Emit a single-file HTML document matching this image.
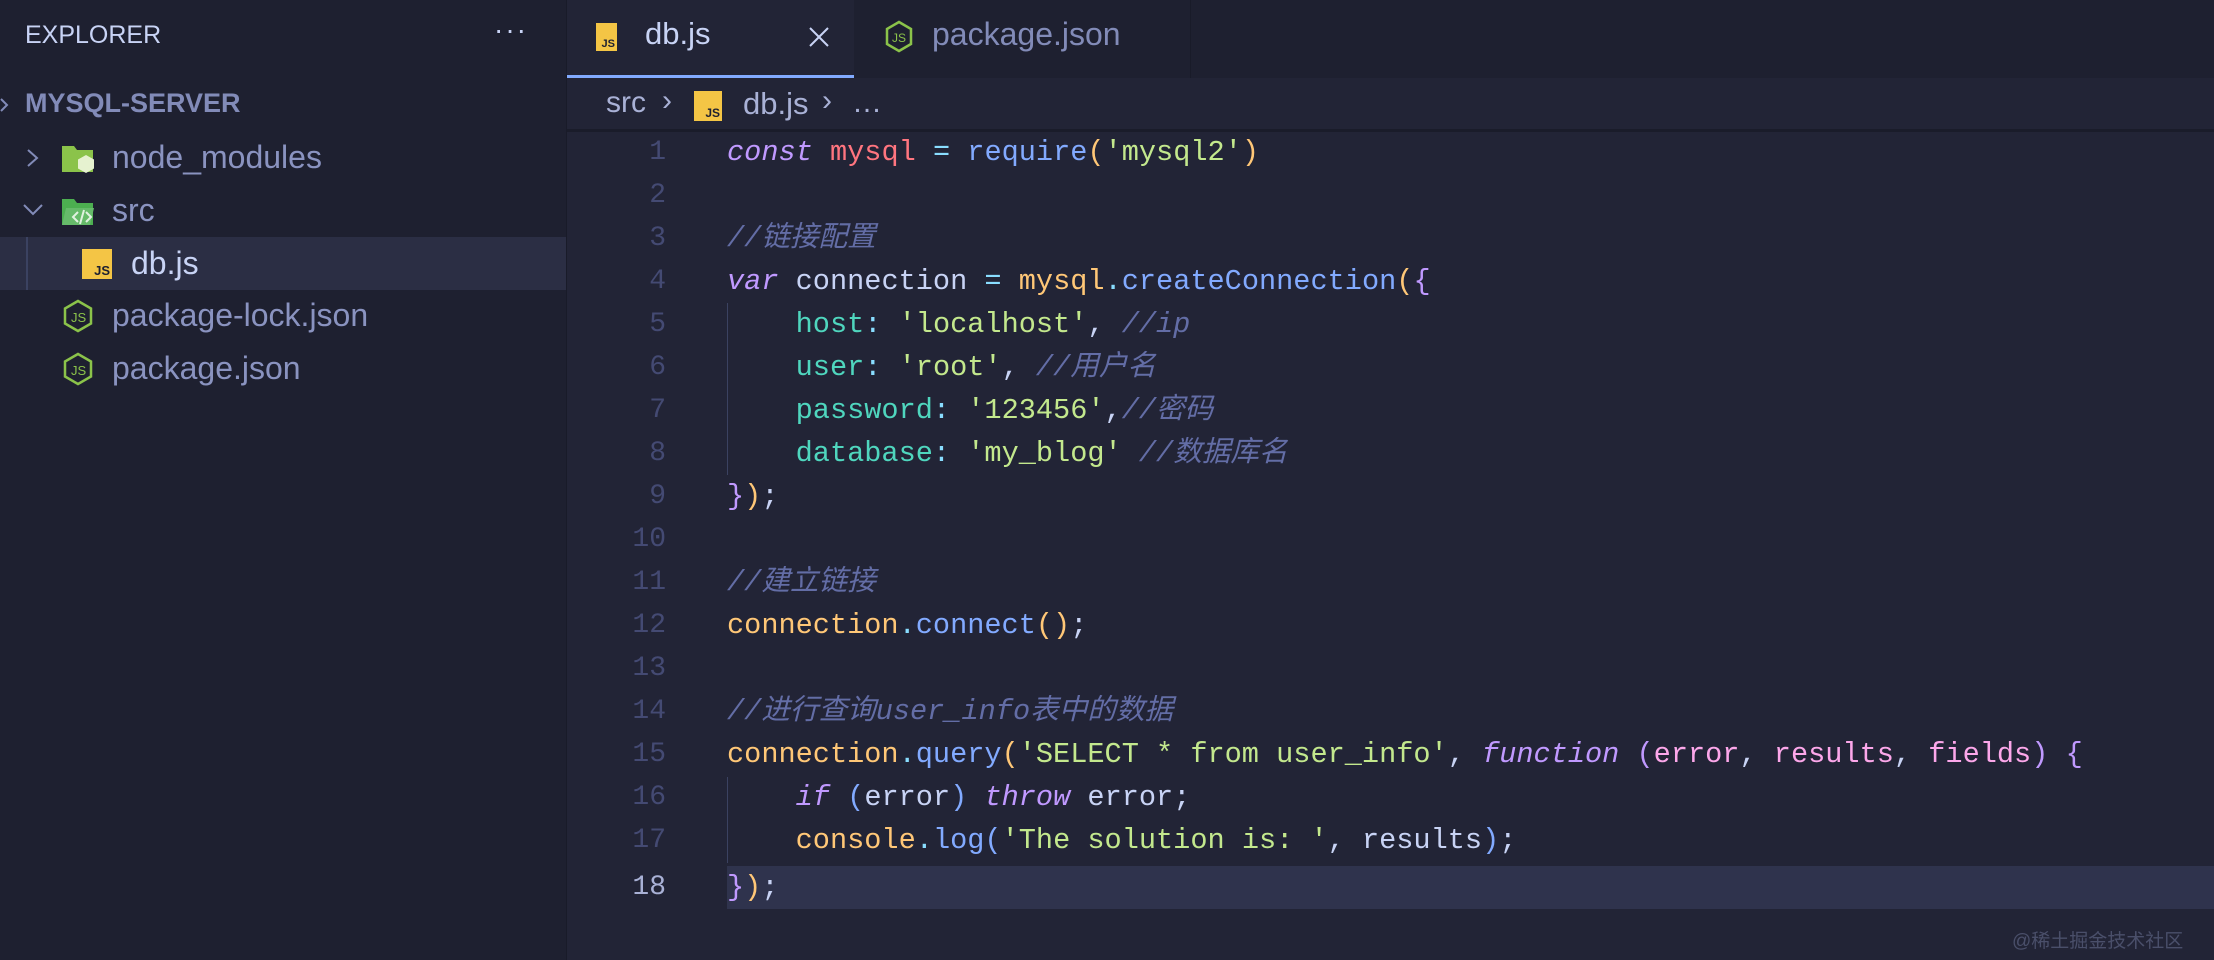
<!DOCTYPE html><html><head><meta charset="utf-8"><style>
body{margin:0;width:2214px;height:960px;overflow:hidden;background:#222436;font-family:"Liberation Sans","Noto Sans CJK SC",sans-serif;position:relative}
.sb{position:absolute;left:0;top:0;width:566px;height:960px;background:#1e2030;border-right:1px solid #191b29}
.a{position:absolute;white-space:nowrap}
.row{position:absolute;left:0;width:566px;height:53px;line-height:53px;font-size:32px;color:#8a93c0}
.js{position:absolute;background:#f4c545;color:#1e2030;font:bold 13px "Liberation Sans",sans-serif;display:flex;align-items:flex-end;justify-content:flex-end;padding:0 2px 1px 0;box-sizing:border-box}
.code{position:absolute;left:727px;font-family:"Liberation Mono","Noto Sans CJK SC",monospace;font-size:28.6px;line-height:43px;height:43px;white-space:pre;color:#c8d3f5}
.ln{position:absolute;width:80px;left:586px;text-align:right;font-family:"Liberation Mono",monospace;font-size:28px;line-height:43px;color:#444a73}
.k{color:#c099ff;font-style:italic}.r{color:#ff757f}.c{color:#89ddff}.f{color:#82aaff}.s{color:#c3e88d}.y{color:#ffc777}.p{color:#c099ff}.t{color:#4fd6be}.cm{color:#636da6;font-style:italic}.pa{color:#fca7ea}
.g{position:absolute;left:727px;width:1px;background:#3b4261}
</style></head><body>
<div class="sb">
<div class="a" style="left:25px;top:21px;font-size:25px;color:#c8d3f5">EXPLORER</div>
<div class="a" style="left:494px;top:14px;font-size:28px;color:#c8d3f5;letter-spacing:2px">···</div>
<svg class="a" style="left:0;top:98px" width="10" height="14"><path d="M1 1l6 6-6 6" stroke="#828bb8" stroke-width="2" fill="none"/></svg>
<div class="a" style="left:25px;top:88px;font-size:27px;font-weight:bold;color:#828bb8">MYSQL-SERVER</div>
<div class="row" style="top:131px"><svg class="a" style="left:25px;top:18px" width="16" height="18"><path d="M3 1l9 8-9 8" stroke="#828bb8" stroke-width="2" fill="none"/></svg>
<svg class="a" style="left:62px;top:12px" width="36" height="32"><path d="M0 3h12l3 4h16v22H0z" fill="#8bc34a"/><path d="M24 12l8 4.5v9L24 30l-8-4.5v-9z" fill="#e6f2d0"/></svg><span class="a" style="left:112px">node_modules</span></div>
<div class="row" style="top:184px"><svg class="a" style="left:22px;top:18px" width="22" height="16"><path d="M2 3l9 9 9-9" stroke="#828bb8" stroke-width="2" fill="none"/></svg>
<svg class="a" style="left:62px;top:12px" width="36" height="32"><path d="M0 3h12l3 4h16v22H0z" fill="#4caf50"/><path d="M4 12h28l-4 17H0z" fill="#66bb6a"/><path d="M16 16l-5 5 5 5M24 16l5 5-5 5M22 14l-4 14" stroke="#e0f2e0" stroke-width="2" fill="none"/></svg><span class="a" style="left:112px">src</span></div>
<div class="row" style="top:237px;background:#2b2e44;color:#c8d3f5"><div class="a" style="left:26px;top:0;width:2px;height:53px;background:#3b4261"></div><div class="js" style="left:82px;top:12px;width:30px;height:30px">JS</div><span class="a" style="left:131px">db.js</span></div>
<div class="row" style="top:289px"><svg class="a" style="left:62px;top:10px" width="32" height="34"><path d="M16 2l13 7.5v15L16 32 3 24.5v-15z" stroke="#8bc34a" stroke-width="2.5" fill="none"/><text x="9" y="23" font-size="13" fill="#8bc34a" font-family="Liberation Sans">JS</text></svg><span class="a" style="left:112px">package-lock.json</span></div>
<div class="row" style="top:342px"><svg class="a" style="left:62px;top:10px" width="32" height="34"><path d="M16 2l13 7.5v15L16 32 3 24.5v-15z" stroke="#8bc34a" stroke-width="2.5" fill="none"/><text x="9" y="23" font-size="13" fill="#8bc34a" font-family="Liberation Sans">JS</text></svg><span class="a" style="left:112px">package.json</span></div>
</div>
<div class="a" style="left:567px;top:0;width:1647px;height:78px;background:#1e2030"></div>
<div class="a" style="left:567px;top:0;width:287px;height:78px;background:#222436;border-bottom:3px solid #82aaff;box-sizing:border-box"></div>
<div class="js" style="left:596px;top:23px;width:21px;height:28px;font-size:11px">JS</div>
<div class="a" style="left:645px;top:16px;font-size:31px;color:#c8d3f5">db.js</div>
<svg class="a" style="left:808px;top:26px" width="22" height="22"><path d="M2 2l18 18M20 2L2 20" stroke="#c8d3f5" stroke-width="2"/></svg>
<svg class="a" style="left:884px;top:20px" width="30" height="34"><path d="M15 2l12 7v15l-12 7-12-7V9z" stroke="#8bc34a" stroke-width="2.5" fill="none"/><text x="8" y="22" font-size="12" fill="#8bc34a" font-family="Liberation Sans">JS</text></svg>
<div class="a" style="left:932px;top:16px;font-size:32px;color:#828bb8">package.json</div>
<div class="a" style="left:1190px;top:0;width:1px;height:78px;background:#191b29"></div>
<div class="a" style="left:606px;top:86px;font-size:30px;color:#a9b1d6">src</div>
<div class="a" style="left:662px;top:84px;font-size:30px;color:#a9b1d6">›</div>
<div class="js" style="left:694px;top:91px;width:28px;height:30px;font-size:12px">JS</div>
<div class="a" style="left:743px;top:86px;font-size:31px;color:#a9b1d6">db.js</div>
<div class="a" style="left:822px;top:84px;font-size:30px;color:#a9b1d6">›</div>
<div class="a" style="left:852px;top:86px;font-size:30px;color:#a9b1d6">…</div>
<div class="a" style="left:567px;top:129px;width:1647px;height:3px;background:#1a1c2a"></div>
<div class="a" style="left:727px;top:866px;width:1487px;height:43px;background:#2f334d"></div>
<div class="g" style="top:303px;height:172px"></div>
<div class="g" style="top:777px;height:86px"></div>
<div class="ln" style="top:131px">1</div><div class="ln" style="top:174px">2</div><div class="ln" style="top:217px">3</div><div class="ln" style="top:260px">4</div><div class="ln" style="top:303px">5</div><div class="ln" style="top:346px">6</div><div class="ln" style="top:389px">7</div><div class="ln" style="top:432px">8</div><div class="ln" style="top:475px">9</div><div class="ln" style="top:518px">10</div><div class="ln" style="top:561px">11</div><div class="ln" style="top:604px">12</div><div class="ln" style="top:647px">13</div><div class="ln" style="top:690px">14</div><div class="ln" style="top:733px">15</div><div class="ln" style="top:776px">16</div><div class="ln" style="top:819px">17</div><div class="ln" style="top:866px;color:#a9b1d6">18</div>
<div class="code" style="top:131px"><span class="k">const</span> <span class="r">mysql</span> <span class="c">=</span> <span class="f">require</span><span class="y">(</span><span class="s">'mysql2'</span><span class="y">)</span></div>
<div class="code" style="top:217px"><span class="cm">//链接配置</span></div>
<div class="code" style="top:260px"><span class="k">var</span> connection <span class="c">=</span> <span class="y">mysql</span><span class="c">.</span><span class="f">createConnection</span><span class="y">(</span><span class="p">{</span></div>
<div class="code" style="top:303px">    <span class="t">host</span><span class="c">:</span> <span class="s">'localhost'</span>, <span class="cm">//ip</span></div>
<div class="code" style="top:346px">    <span class="t">user</span><span class="c">:</span> <span class="s">'root'</span>, <span class="cm">//用户名</span></div>
<div class="code" style="top:389px">    <span class="t">password</span><span class="c">:</span> <span class="s">'123456'</span>,<span class="cm">//密码</span></div>
<div class="code" style="top:432px">    <span class="t">database</span><span class="c">:</span> <span class="s">'my_blog'</span> <span class="cm">//数据库名</span></div>
<div class="code" style="top:475px"><span class="p">}</span><span class="y">)</span>;</div>
<div class="code" style="top:561px"><span class="cm">//建立链接</span></div>
<div class="code" style="top:604px"><span class="y">connection</span><span class="c">.</span><span class="f">connect</span><span class="y">()</span>;</div>
<div class="code" style="top:690px"><span class="cm">//进行查询user_info表中的数据</span></div>
<div class="code" style="top:733px"><span class="y">connection</span><span class="c">.</span><span class="f">query</span><span class="y">(</span><span class="s">'SELECT * from user_info'</span>, <span class="k">function</span> <span class="p">(</span><span class="pa">error</span>, <span class="pa">results</span>, <span class="pa">fields</span><span class="p">)</span> <span class="p">{</span></div>
<div class="code" style="top:776px">    <span class="k">if</span> <span class="f">(</span>error<span class="f">)</span> <span class="k">throw</span> error;</div>
<div class="code" style="top:819px">    <span class="y">console</span><span class="c">.</span><span class="f">log</span><span class="f">(</span><span class="s">'The solution is: '</span>, results<span class="f">)</span>;</div>
<div class="code" style="top:866px"><span class="p">}</span><span class="y">)</span>;</div>
<div class="a" style="left:2012px;top:926px;font-size:19px;color:#4a4f6a">@稀土掘金技术社区</div>
</body></html>
